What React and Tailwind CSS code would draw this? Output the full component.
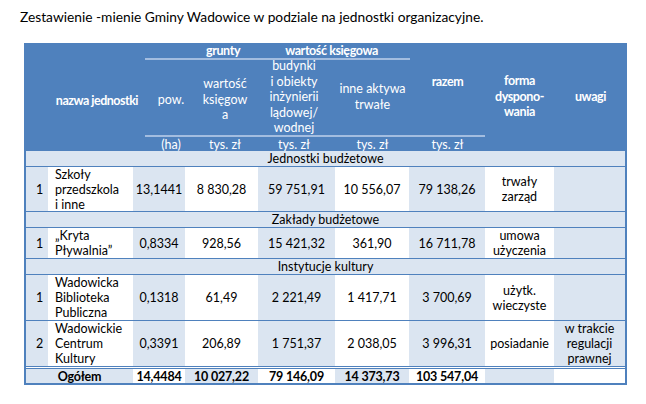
const L = "bg-[#dbe5f1]";
const W = "bg-white";
const bodyCols = "grid grid-cols-[22px_85px_52px_73px_77px_74px_76px_69px_71px]";
const center = "flex items-center justify-center text-center";

function DataRow({ rows, nr, name, vals, forma, uwagi, last }) {
  return (
    <div className={`${bodyCols} ${rows} ${last ? "" : "border-b border-[#4f81bd]"}`}>
      <div className={`${L} ${center} pl-[5px]`}>{nr}</div>
      <div className={`${W} flex items-center pl-[7px]`}>
        <div>{name}</div>
      </div>
      <div className={`${L} ${center}`}>{vals[0]}</div>
      <div className={`${W} ${center}`}>{vals[1]}</div>
      <div className={`${L} ${center}`}>{vals[2]}</div>
      <div className={`${W} ${center}`}>{vals[3]}</div>
      <div className={`${L} ${center}`}>{vals[4]}</div>
      <div className={`${W} ${center}`}>
        <div>{forma}</div>
      </div>
      <div className={`${L} ${center}`}>
        <div>{uwagi}</div>
      </div>
    </div>
  );
}

function GroupRow({ text }) {
  return (
    <div className={`${L} h-[16px] border-b border-[#4f81bd] ${center}`}>
      {text}
    </div>
  );
}

export default function App() {
  return (
    <div className="w-[646px] h-[404px] bg-white text-black font-['Lato',sans-serif]">
      <div className="pl-[20px] pt-[8px] text-[13.75px] leading-[18px]">
        Zestawienie -mienie Gminy Wadowice w podziale na jednostki organizacyjne.
      </div>
      <div className="ml-[24px] mt-[17px] w-[603px] text-[12.5px] leading-[15px]">
        {/* header */}
        <div className="bg-[#4f81bd] text-white leading-[15.5px] grid grid-cols-[24px_97px_52px_56px_82px_75px_75px_69px_73px] grid-rows-[17px_75px_16px]">
          <div className="col-start-2 row-start-1 row-span-3 text-right pr-[7px] font-bold tracking-[-0.5px] pt-[50px]">
            nazwa jednostki
          </div>
          <div className="col-start-3 col-span-4 row-start-1 border-b-2 border-[#a3bde0] flex items-center font-bold tracking-[-0.4px]">
            <span className="ml-[61px]">grunty</span>
            <span className="ml-[45px]">wartość księgowa</span>
          </div>
          <div className="col-start-3 row-start-2 text-center pt-[32px]">pow.</div>
          <div className="col-start-4 row-start-2 text-center pt-[16px]">
            wartość
            <br />
            księgow
            <br />a
          </div>
          <div className="col-start-5 row-start-2 text-center -mt-[2px]">
            budynki
            <br />i obiekty
            <br />
            inżynierii
            <br />
            lądowej/
            <br />
            wodnej
          </div>
          <div className="col-start-6 row-start-2 text-center pt-[21px]">
            inne aktywa
            <br />
            trwałe
          </div>
          <div className="col-start-7 row-start-2 text-center font-bold tracking-[-0.4px] pt-[14px]">razem</div>
          <div className="col-start-8 row-start-1 row-span-3 text-center font-bold tracking-[-0.4px] pt-[30px]">
            forma
            <br />
            dyspono-
            <br />
            wania
          </div>
          <div className="col-start-9 row-start-1 row-span-3 text-center font-bold tracking-[-0.4px] pt-[46px]">
            uwagi
          </div>
          <div className="col-start-3 row-start-3 border-t-2 border-[#a3bde0] text-center leading-[15px]">(ha)</div>
          <div className="col-start-4 row-start-3 border-t-2 border-[#a3bde0] text-center leading-[15px]">tys. zł</div>
          <div className="col-start-5 row-start-3 border-t-2 border-[#a3bde0] text-center leading-[15px]">tys. zł</div>
          <div className="col-start-6 row-start-3 border-t-2 border-[#a3bde0] text-center leading-[15px]">tys. zł</div>
          <div className="col-start-7 row-start-3 border-t-2 border-[#a3bde0] text-center leading-[15px]">tys. zł</div>
        </div>

        {/* body */}
        <div className="border-x-2 border-b-2 border-[#4f81bd]">
          <GroupRow text="Jednostki budżetowe" />
          <DataRow
            rows="grid-rows-[44px]"
            nr="1"
            name={<>Szkoły<br />przedszkola<br />i inne</>}
            vals={["13,1441", "8 830,28", "59 751,91", "10 556,07", "79 138,26"]}
            forma={<>trwały<br />zarząd</>}
            uwagi=""
          />
          <GroupRow text="Zakłady budżetowe" />
          <DataRow
            rows="grid-rows-[30px]"
            nr="1"
            name={<>„Kryta<br />Pływalnia”</>}
            vals={["0,8334", "928,56", "15 421,32", "361,90", "16 711,78"]}
            forma={<>umowa<br />użyczenia</>}
            uwagi=""
          />
          <GroupRow text="Instytucje kultury" />
          <DataRow
            rows="grid-rows-[45px]"
            nr="1"
            name={<>Wadowicka<br />Biblioteka<br />Publiczna</>}
            vals={["0,1318", "61,49", "2 221,49", "1 417,71", "3 700,69"]}
            forma={<>użytk.<br />wieczyste</>}
            uwagi=""
          />
          <DataRow
            rows="grid-rows-[45px]"
            nr="2"
            name={<>Wadowickie<br />Centrum<br />Kultury</>}
            vals={["0,3391", "206,89", "1 751,37", "2 038,05", "3 996,31"]}
            forma="posiadanie"
            uwagi={<>w trakcie<br />regulacji<br />prawnej</>}
            last
          />
          <div className={`${bodyCols} grid-rows-[14px] border-t-[3px] border-double border-[#4f81bd] font-bold tracking-[-0.2px]`}>
            <div className={`${L} ${center} col-span-2`}>Ogółem</div>
            <div className={`${W} ${center}`}>14,4484</div>
            <div className={`${L} ${center}`}>10 027,22</div>
            <div className={`${W} ${center}`}>79 146,09</div>
            <div className={`${L} ${center}`}>14 373,73</div>
            <div className={`${W} ${center}`}>103 547,04</div>
            <div className={`${L}`}></div>
            <div className={`${W}`}></div>
          </div>
        </div>
      </div>
    </div>
  );
}
